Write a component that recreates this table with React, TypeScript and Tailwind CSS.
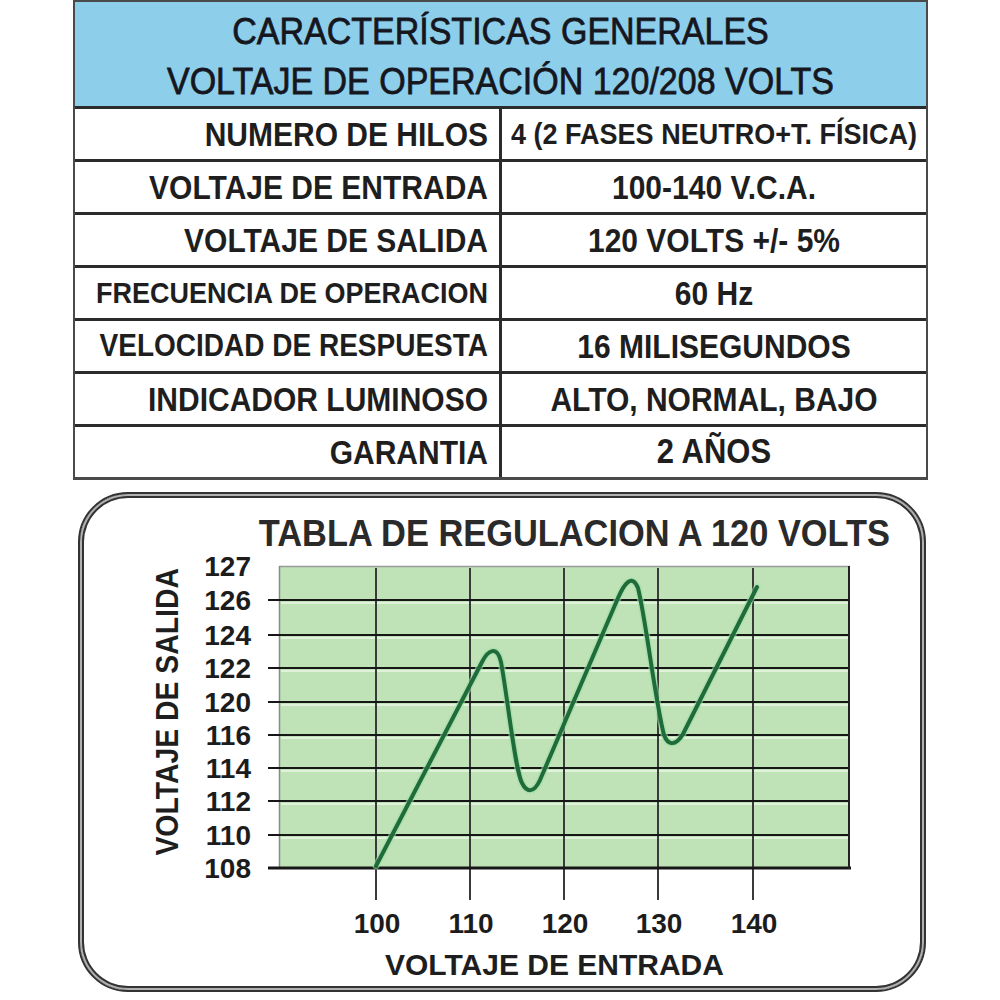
const FONT = "font-['Liberation_Sans',Arial,sans-serif]"

type Row = { label: string; value: string; labelSize: string; valueSize: string }

const ROWS: Row[] = [
  { label: 'NUMERO DE HILOS', value: '4 (2 FASES NEUTRO+T. FÍSICA)', labelSize: 'text-[30px]', valueSize: 'text-[27px]' },
  { label: 'VOLTAJE DE ENTRADA', value: '100-140 V.C.A.', labelSize: 'text-[30px]', valueSize: 'text-[30px]' },
  { label: 'VOLTAJE DE SALIDA', value: '120 VOLTS +/- 5%', labelSize: 'text-[30px]', valueSize: 'text-[30px]' },
  { label: 'FRECUENCIA DE OPERACION', value: '60 Hz', labelSize: 'text-[27px]', valueSize: 'text-[30px]' },
  { label: 'VELOCIDAD DE RESPUESTA', value: '16 MILISEGUNDOS', labelSize: 'text-[28px]', valueSize: 'text-[30px]' },
  { label: 'INDICADOR LUMINOSO', value: 'ALTO, NORMAL, BAJO', labelSize: 'text-[30px]', valueSize: 'text-[30px]' },
  { label: 'GARANTIA', value: '2 AÑOS', labelSize: 'text-[30px]', valueSize: 'text-[31px]' },
]

// y positions of the horizontal grid lines, page coordinates
const Y_TICKS = [
  { label: '127', y: 566 },
  { label: '126', y: 600 },
  { label: '124', y: 635 },
  { label: '122', y: 668 },
  { label: '120', y: 702 },
  { label: '116', y: 735 },
  { label: '114', y: 768 },
  { label: '112', y: 801 },
  { label: '110', y: 835 },
  { label: '108', y: 868 },
]

const X_TICKS = [
  { label: '100', x: 376 },
  { label: '110', x: 470 },
  { label: '120', x: 564 },
  { label: '130', x: 658 },
  { label: '140', x: 753 },
]

const CURVE =
  'M376 866 L482 662 C488 650, 497 645, 501 662 C508 700, 515 770, 522 783 ' +
  'C527 793, 534 793, 540 780 L618 598 C624 584, 632 573, 638 588 ' +
  'C646 620, 655 700, 664 735 C668 746, 676 746, 683 734 L757 587'

function RegulationChart() {
  return (
    <svg width={670} height={390} viewBox="195 550 670 390" className="block">
      <rect x={279} y={566} width={571} height={302} fill="#bfe3b6" />
      <line x1={279} y1={566.5} x2={850} y2={566.5} stroke="#9a9a9a" strokeWidth={1.5} />
      <line x1={279.5} y1={566} x2={279.5} y2={868} stroke="#8a8a8a" strokeWidth={1.5} />
      {Y_TICKS.slice(1, -1).map((t) => (
        <line key={`hl-${t.y}`} x1={281} y1={t.y + 3} x2={848} y2={t.y + 3} stroke="#e0f2da" strokeWidth={2} />
      ))}
      {X_TICKS.map((t) => (
        <line key={t.label} x1={t.x} y1={568} x2={t.x} y2={900} stroke="#3a3a3a" strokeWidth={2} />
      ))}
      {Y_TICKS.slice(1, -1).map((t) => (
        <line key={t.label} x1={268} y1={t.y} x2={849} y2={t.y} stroke="#161616" strokeWidth={2.2} />
      ))}
      <line x1={268} y1={868} x2={851} y2={868} stroke="#161616" strokeWidth={3} />
      <line x1={849} y1={566} x2={849} y2={869} stroke="#222" strokeWidth={2} />
      <path d={CURVE} fill="none" stroke="#9fdca8" strokeWidth={7} strokeLinecap="round" strokeLinejoin="round" opacity={0.6} />
      <path d={CURVE} fill="none" stroke="#1f6b3a" strokeWidth={4} strokeLinecap="round" strokeLinejoin="round" />
      <g fontFamily="'Liberation Sans', Arial, sans-serif" fontWeight={700} fontSize={28} fill="#1c1c1c">
        {Y_TICKS.map((t) => (
          <text key={t.label} x={251} y={t.y + 10} textAnchor="end">
            {t.label}
          </text>
        ))}
        {X_TICKS.map((t) => (
          <text key={t.label} x={t.x + 1} y={933} textAnchor="middle">
            {t.label}
          </text>
        ))}
      </g>
    </svg>
  )
}

export default function App() {
  return (
    <div className={`w-[1000px] h-[1000px] overflow-hidden bg-white text-[#1e1e1e] ${FONT}`}>
      <div className="ml-[73px] w-[855px] border-x-2 border-t-2 border-b-[3px] border-[#4a4a4a]">
        <div className="flex h-[104px] flex-col items-center bg-[#8dcfeb] pt-[4px] text-[34px] leading-[50px] text-[#16161e] [-webkit-text-stroke:0.7px_#16161e]">
          <div className="scale-y-[1.1]">CARACTERÍSTICAS GENERALES</div>
          <div className="scale-y-[1.1]">VOLTAJE DE OPERACIÓN 120/208 VOLTS</div>
        </div>
        {ROWS.map((row) => (
          <div key={row.label} className="grid h-[53px] grid-cols-[424px_1fr] border-t-[3px] border-[#2b2b2b] font-bold">
            <div className={`flex items-center justify-end pr-[11px] ${row.labelSize}`}>
              <span className="inline-block scale-y-[1.12]">{row.label}</span>
            </div>
            <div className={`flex items-center justify-center border-l-[3px] border-[#2b2b2b] ${row.valueSize}`}>
              <span className="inline-block scale-y-[1.12]">{row.value}</span>
            </div>
          </div>
        ))}
      </div>

      <div className="ml-[78px] mt-[12px] h-[500px] w-[848px] rounded-[50px] border-2 border-[#333] shadow-[inset_0_0_0_2px_#b0b0b0,inset_0_0_0_4px_#333]">
        <div className="pr-[34px] pt-[22px] text-right text-[34.4px] font-bold leading-[34px] text-[#2a2a2a]">
          <span className="inline-block scale-y-[1.08]">TABLA DE REGULACION A 120 VOLTS</span>
        </div>
        <div className="flex">
          <div className="w-[115px]">
            <div className="ml-[73px] mt-[18px] rotate-180 scale-x-[1.12] text-[28.4px] font-bold leading-[28px] [writing-mode:vertical-rl]">
              VOLTAJE DE SALIDA
            </div>
          </div>
          <RegulationChart />
        </div>
        <div className="mt-[10px] pl-[305px] text-[30px] font-bold leading-[30px]">VOLTAJE DE ENTRADA</div>
      </div>
    </div>
  )
}
